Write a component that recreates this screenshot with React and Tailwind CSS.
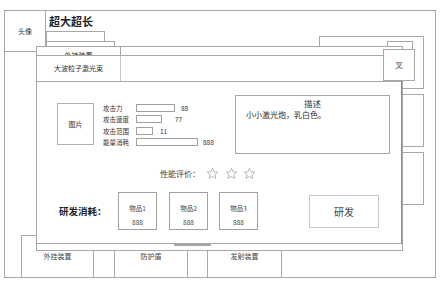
import React from "react"

const stats = [
  { label: "攻击力", bar: "w-[39px]", num: "88", gap: "ml-[6px]" },
  { label: "攻击速度", bar: "w-[26px]", num: "77", gap: "ml-[13px]" },
  { label: "攻击范围", bar: "w-[17px]", num: "11", gap: "ml-[7px]" },
  { label: "能量消耗", bar: "w-[62px]", num: "888", gap: "ml-[5px]" },
]

const items = [
  { name: "物品1", cost: "888", space: "" },
  { name: "物品2", cost: "888", space: "ml-[12px]" },
  { name: "物品3", cost: "888", space: "ml-[11px]" },
]

// 空心星星
const Star = ({ className }) => (
  <svg className={className} width="13" height="13" viewBox="0 0 24 24" fill="none" stroke="#9a9a9a" strokeWidth="1.3" strokeLinejoin="round">
    <path d="M12 2.5l2.9 6.3 6.8.7-5.1 4.6 1.5 6.8L12 17.4l-6.1 3.5 1.5-6.8-5.1-4.6 6.8-.7z" />
  </svg>
)

const App = () => {
  return (
    <div
      className="relative w-[441px] h-[284px] bg-white overflow-hidden pl-[4px] pt-[10px] text-[#333]"
      style={{ fontFamily: '"Noto Sans CJK SC", "Noto Sans", sans-serif' }}
    >
      {/* 背景页面 */}
      <div className="w-[432px] h-[268px] border border-[#a8a8a8] flex flex-col">
        <div className="flex flex-1">
          <div className="w-[41px]">
            <div className="h-[41px] border-r border-b border-[#a8a8a8] flex items-center justify-center text-[7px] leading-none">
              头像
            </div>
          </div>

          <div className="flex-1">
            <div className="pl-[3px] pt-[3px] text-[11px] leading-[14px] font-bold text-[#222]">超大超长</div>
            <div className="mt-[3px] w-[59px] h-[11px] border border-[#a8a8a8]"></div>
            <div className="-mt-[1px] w-[69px] h-[10px] border border-[#a8a8a8]"></div>
          </div>

          <div className="w-[105px] mr-[11px] pt-[25px]">
            <div className="h-[53px] border border-[#a8a8a8] flex justify-end pt-[4px] pr-[10px]">
              <div className="w-[26px] h-[9px] border border-[#a8a8a8]"></div>
            </div>
            <div className="mt-[5px] h-[53px] border border-[#a8a8a8]"></div>
            <div className="mt-[5px] h-[53px] border border-[#a8a8a8]"></div>
          </div>
        </div>

        {/* 底部标签 */}
        <div className="h-[42px] flex pl-[16px] text-[7px] leading-[10px] text-[#444]">
          <div className="w-[73px] border-l border-t border-r border-[#a8a8a8] pt-[15px] text-center">外挂装置</div>
          <div className="w-[21px] border-t border-r border-[#a8a8a8]"></div>
          <div className="w-[73px] border-t border-r border-[#a8a8a8] pt-[15px] text-center">防护盾</div>
          <div className="w-[20px] border-t border-r border-[#a8a8a8]"></div>
          <div className="w-[74px] border-t border-r border-[#a8a8a8] pt-[15px] text-center">发射装置</div>
        </div>
      </div>

      {/* 弹窗后面的面板 */}
      <div className="absolute left-[36px] top-[46px] w-[367px] h-[205px] border border-[#a8a8a8] bg-white">
        <div className="w-[84px] h-[10px] border-r border-[#a8a8a8] text-[7px] leading-[16px] text-center overflow-hidden">外挂装置</div>
      </div>
      <div className="absolute left-[174px] top-[244px] w-[37px] h-[2px] bg-[#a8a8a8]"></div>

      {/* 弹窗 */}
      <div className="absolute left-[36px] top-[55px] w-[366px] h-[189px] border border-[#a8a8a8] border-r-[#8c8c8c] bg-white flex flex-col">
        <div className="h-[26px] border-b border-[#a8a8a8] flex">
          <div className="w-[84px] border-r border-[#c4c4c4] flex items-center justify-center text-[7px] text-[#333]">
            大波粒子激光束
          </div>
        </div>

        <div className="flex items-start pt-[13px]">
          <div className="ml-[20px] mt-[8px] w-[37px] h-[42px] border border-[#b0b0b0] flex items-center justify-center text-[7px]">
            图片
          </div>
          <div className="ml-[9px] mt-[7px] flex flex-col">
            {stats.map((s) => (
              <div key={s.label} className="h-[11.5px] flex items-center text-[6.5px] leading-none">
                <span className="w-[33px]">{s.label}</span>
                <span className={`${s.bar} h-[8px] border border-[#a0a0a0]`}></span>
                <span className={s.gap}>{s.num}</span>
              </div>
            ))}
          </div>
          <div className="ml-auto mr-[11px] w-[155px] h-[59px] border border-[#a8a8a8] text-[8.5px] leading-[12px]">
            <div className="text-center pt-[1px]">描述</div>
            <div className="pl-[10px] text-[8px]">小小激光炮，乳白色。</div>
          </div>
        </div>

        <div className="mt-[13px] pl-[123px] flex items-center text-[8px] leading-[12px] text-[#444]">
          <span>性能评价：</span>
          <Star className="ml-[6px]" />
          <Star className="ml-[6px]" />
          <Star className="ml-[5px]" />
        </div>

        <div className="mt-[12px] flex items-center">
          <div className="ml-[22px] w-[59px] text-[9.5px] font-bold text-[#222]">研发消耗：</div>
          {items.map((it) => (
            <div
              key={it.name}
              className={`${it.space} w-[39px] h-[38px] border border-[#a0a0a0] flex flex-col items-center pt-[11px] text-[6.5px] leading-[9px] text-[#444]`}
            >
              <span>{it.name}</span>
              <span className="mt-[5px]">{it.cost}</span>
            </div>
          ))}
          <div className="ml-[51px] w-[70px] h-[33px] border border-[#c8c8c8] flex items-center justify-center text-[10px] text-[#444]">
            研发
          </div>
        </div>
      </div>

      {/* 关闭按钮 */}
      <div className="absolute left-[383px] top-[49px] w-[32px] h-[32px] border border-[#a8a8a8] bg-white flex items-center justify-center text-[8px] text-[#555]">
        叉
      </div>
    </div>
  )
}

export default App
